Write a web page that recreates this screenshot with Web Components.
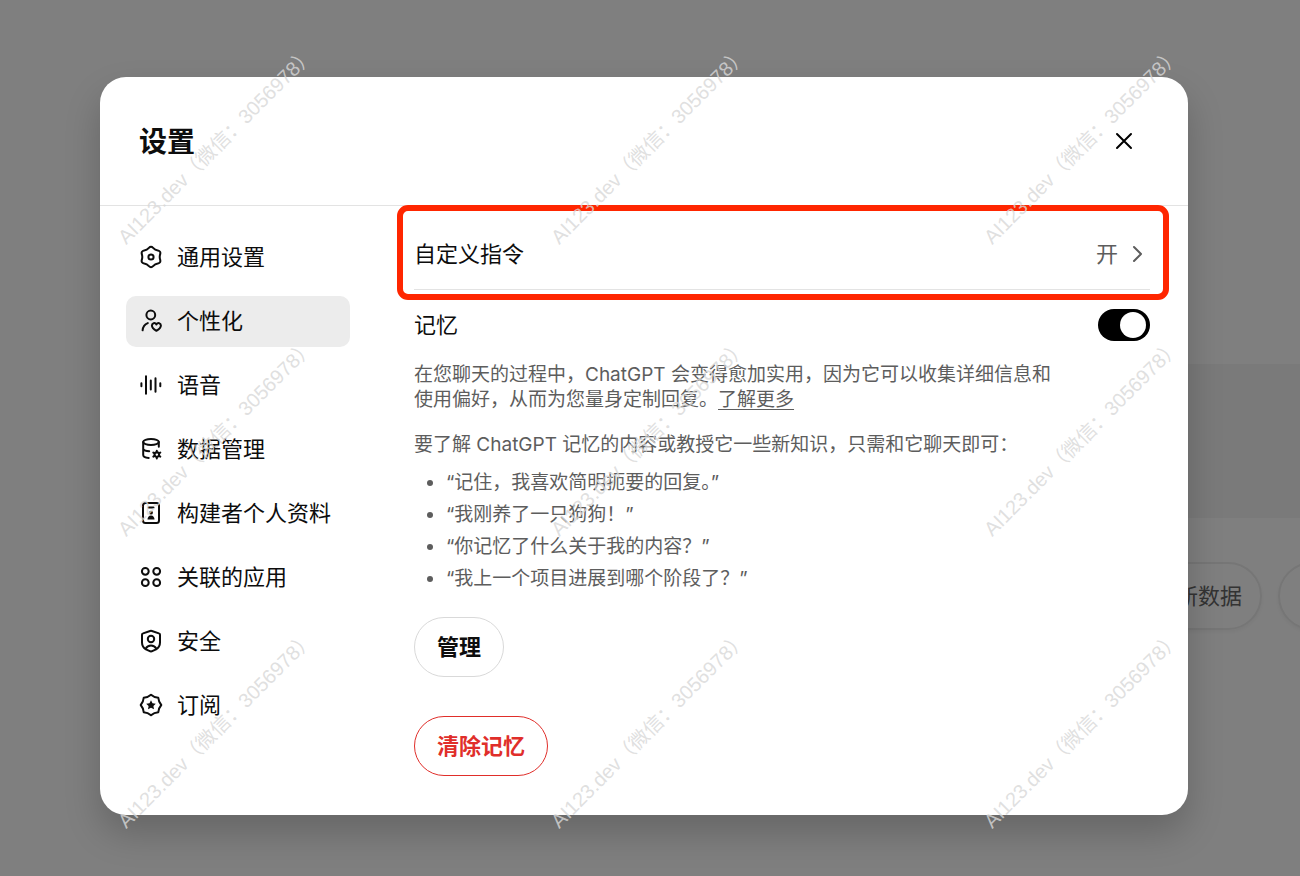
<!DOCTYPE html>
<html lang="zh-CN">
<head>
<meta charset="UTF-8">
<meta name="viewport" content="width=device-width, initial-scale=1.0">
<title>设置</title>
<style>
  body {
    margin: 0;
    background: #ffffff;
    font-family: Inter, "Noto Sans CJK SC", sans-serif;
    color: #0d0d0d;
  }
</style>
</head>
<body>
<chat-page>
  <settings-dialog heading="设置">
    <settings-tab slot="nav" icon="gear">通用设置</settings-tab>
    <settings-tab slot="nav" icon="person" active>个性化</settings-tab>
    <settings-tab slot="nav" icon="voice">语音</settings-tab>
    <settings-tab slot="nav" icon="data">数据管理</settings-tab>
    <settings-tab slot="nav" icon="builder">构建者个人资料</settings-tab>
    <settings-tab slot="nav" icon="apps">关联的应用</settings-tab>
    <settings-tab slot="nav" icon="shield">安全</settings-tab>
    <settings-tab slot="nav" icon="badge">订阅</settings-tab>

    <link-row value="开">自定义指令</link-row>
    <toggle-row>记忆</toggle-row>
    <memory-info></memory-info>
    <pill-button>管理</pill-button>
    <pill-button danger>清除记忆</pill-button>
  </settings-dialog>
</chat-page>
<water-mark text="AI123.dev（微信：3056978）"></water-mark>

<script>
const ICONS = {
  gear: `<path d="M9.900 2.900Q12 .6 14.100 2.900Q16 5 18.800 5.400Q22 6.200 21.200 9.200Q20.200 12 21.200 14.800Q22 17.800 18.800 18.600Q16 19 14.100 21.100Q12 23.400 9.900 21.100Q8 19 5.200 18.600Q2 17.800 2.800 14.800Q3.800 12 2.800 9.200Q2 6.200 5.200 5.400Q8 5 9.900 2.900z"/><circle cx="12" cy="12" r="2.600"/>`,
  person: `<circle cx="11.800" cy="6" r="4.400"/><path d="M3.600 21.300c.3-3.600 2.200-6 5.200-7.200"/><path d="M17.400 21.800c-2.700-1.500-4.500-3.100-4.500-5.200 0-2.600 3.100-3.400 4.500-1.200 1.400-2.200 4.500-1.400 4.500 1.200 0 2.100-1.800 3.700-4.500 5.200z"/>`,
  voice: `<path d="M2.400 10.300v3M7 3.300v17.400M11.800 7.500v9M16.500 5.300v13.400M21.300 10.300v3"/>`,
  data: `<ellipse cx="12" cy="5" rx="7.800" ry="3"/><path d="M4.200 5v13c0 1.500 2.200 2.700 5.500 3M19.800 5v4.800M4.200 12c.8 1.300 3 2.100 6 2.300"/><g stroke-width="2"><circle cx="17.800" cy="17.600" r="2.300"/><path d="M17.800 13.800v1.700M17.800 19.800v1.700M14.300 15.600l1.500.9M19.800 18.700l1.500.9M14.300 19.600l1.500-.9M19.800 16.500l1.500-.9"/></g>`,
  builder: `<rect x="4" y="2" width="16" height="20" rx="2.500"/><path d="M9.500 6.500h5"/><circle cx="12" cy="11.700" r="1.900" fill="currentColor" stroke="none"/><path d="M8.500 18.500c0-2.300 1.300-4.100 3.500-4.100s3.500 1.800 3.500 4.100z" fill="currentColor" stroke="none"/>`,
  apps: `<circle cx="6.300" cy="6.300" r="3.400"/><circle cx="17.700" cy="6.300" r="3.400"/><circle cx="6.300" cy="17.700" r="3.400"/><circle cx="17.700" cy="17.700" r="3.400"/>`,
  shield: `<path d="M11.100 2a3 3 0 0 1 1.800 0l7 2.400a1.500 1.500 0 0 1 1.100 1.500v7.600c0 3.200-1.500 5.300-3.900 6.800l-3.400 1.600a3.400 3.400 0 0 1-3.400 0l-3.400-1.600C4.500 18.800 3 16.700 3 13.500V5.900a1.500 1.500 0 0 1 1.100-1.500z"/><circle cx="12" cy="10" r="3.200"/><path d="M6.800 19.500c1-2 3-3.100 5.200-3.100s4.200 1.100 5.200 3.100"/>`,
  badge: `<path d="M12 1.700Q15.140 4.420 19.280 4.720Q19.580 8.860 22.300 12Q19.580 15.140 19.280 19.280Q15.140 19.580 12 22.300Q8.860 19.580 4.720 19.280Q4.420 15.140 1.700 12Q4.420 8.860 4.720 4.720Q8.860 4.420 12 1.700z"/><path d="M12 7.200l1.500 3 3.300.5-2.400 2.300.6 3.300-3-1.600-3 1.600.6-3.300-2.400-2.300 3.300-.5z" fill="currentColor" stroke="none"/>`,
  close: `<path d="M5 4l14 14M19 4L5 18"/>`,
  chevron: `<path d="M8 5l7 7-7 7"/>`
};

function icon(name) {
  return `<svg width="24" height="24" viewBox="0 0 24 24" fill="none" stroke="currentColor" stroke-width="2" stroke-linecap="round" stroke-linejoin="round" aria-hidden="true">${ICONS[name]}</svg>`;
}

// page behind the dialog, dimmed by the backdrop
class ChatPage extends HTMLElement {
  constructor() {
    super();
    this.attachShadow({ mode: "open" });
  }

  connectedCallback() {
    this.shadowRoot.innerHTML = `
      <style>
        :host {
          display: block;
          position: relative;
          min-height: 100vh;
          overflow: hidden;
        }
        .behind {
          position: absolute;
          inset: 0;
          padding-top: 364px;
        }
        .composer {
          height: 154px;
          margin-left: 160px;
          background: #f4f4f4;
        }
        .chips {
          display: flex;
          justify-content: flex-end;
          gap: 16px;
          margin-top: 44px;
          margin-right: -154px;
        }
        .chips button {
          flex: none;
          height: 68px;
          padding: 0 18px;
          border: 2px solid #ececec;
          border-radius: 34px;
          background: none;
          box-shadow: 0 2px 4px rgba(0, 0, 0, 0.05);
          font: inherit;
          font-size: 22px;
          line-height: 32px;
          color: #676767;
        }
        .chips button:last-child {
          width: 176px;
        }
        .backdrop {
          position: relative;
          box-sizing: border-box;
          min-height: 100vh;
          padding: 77px 112px 61px 100px;
          background: rgba(0, 0, 0, 0.5);
        }
      </style>
      <div class="behind">
        <div class="composer"></div>
        <div class="chips">
          <button type="button">分析最新数据</button>
          <button type="button">上传您的文件</button>
        </div>
      </div>
      <div class="backdrop"><slot></slot></div>
    `;
  }
}
customElements.define("chat-page", ChatPage);

class SettingsDialog extends HTMLElement {
  constructor() {
    super();
    this.attachShadow({ mode: "open" });
  }

  connectedCallback() {
    this.shadowRoot.innerHTML = `
      <style>
        :host {
          display: block;
          border-radius: 26px;
          background: #ffffff;
          box-shadow: 0 18px 36px rgba(0, 0, 0, 0.2);
        }
        header {
          display: flex;
          align-items: center;
          justify-content: space-between;
          padding: 41px 48px 39px 39px;
          border-bottom: 1px solid #e3e3e3;
        }
        h2 {
          margin: 0;
          font-size: 28px;
          line-height: 48px;
          font-weight: 700;
        }
        .close {
          display: grid;
          place-items: center;
          width: 32px;
          height: 32px;
          padding: 0;
          border: none;
          background: none;
          color: #000000;
        }
        .body {
          display: grid;
          grid-template-columns: 224px minmax(0, 1fr);
          gap: 64px;
          padding: 0 38px 39px 26px;
        }
        nav {
          display: flex;
          flex-direction: column;
          gap: 13px;
          padding-top: 26px;
        }
      </style>
      <header>
        <h2>${this.getAttribute("heading")}</h2>
        <button class="close" type="button" aria-label="关闭">${icon("close")}</button>
      </header>
      <div class="body">
        <nav><slot name="nav"></slot></nav>
        <section><slot></slot></section>
      </div>
    `;
  }
}
customElements.define("settings-dialog", SettingsDialog);

class SettingsTab extends HTMLElement {
  constructor() {
    super();
    this.attachShadow({ mode: "open" });
  }

  connectedCallback() {
    this.shadowRoot.innerHTML = `
      <style>
        :host {
          display: block;
        }
        button {
          display: flex;
          align-items: center;
          gap: 14px;
          width: 100%;
          height: 51px;
          padding: 0 13px 1px;
          border: none;
          border-radius: 10px;
          background: none;
          font: inherit;
          font-size: 22px;
          line-height: 32px;
          color: inherit;
          white-space: nowrap;
        }
        svg {
          flex: none;
        }
        :host([active]) button {
          background: #ececec;
        }
      </style>
      <button type="button">${icon(this.getAttribute("icon"))}<slot></slot></button>
    `;
  }
}
customElements.define("settings-tab", SettingsTab);

class LinkRow extends HTMLElement {
  constructor() {
    super();
    this.attachShadow({ mode: "open" });
  }

  connectedCallback() {
    this.shadowRoot.innerHTML = `
      <style>
        :host {
          display: block;
          position: relative;
          font-size: 22px;
        }
        .row {
          display: flex;
          align-items: center;
          justify-content: space-between;
          padding: 32px 0 19px;
          border-bottom: 1px solid #e3e3e3;
          line-height: 32px;
        }
        button {
          display: flex;
          align-items: center;
          gap: 8px;
          padding: 0;
          border: none;
          background: none;
          font: inherit;
          color: #5d5d5d;
        }
        /* red marker drawn around the row */
        .marker {
          position: absolute;
          inset: -1px -19px -10px -17px;
          border: 6px solid #ff2600;
          border-radius: 11px;
          pointer-events: none;
        }
      </style>
      <div class="row">
        <span id="label"><slot></slot></span>
        <button type="button" aria-describedby="label">${this.getAttribute("value")}${icon("chevron")}</button>
      </div>
      <div class="marker"></div>
    `;
  }
}
customElements.define("link-row", LinkRow);

class ToggleRow extends HTMLElement {
  constructor() {
    super();
    this.attachShadow({ mode: "open" });
  }

  connectedCallback() {
    this.shadowRoot.innerHTML = `
      <style>
        :host {
          display: block;
          padding: 19px 0 21px;
          font-size: 22px;
          line-height: 32px;
        }
        div {
          display: flex;
          align-items: center;
          justify-content: space-between;
        }
        input {
          appearance: none;
          display: flex;
          align-items: center;
          box-sizing: border-box;
          width: 52px;
          height: 32px;
          margin: 0;
          padding: 0 4px;
          border-radius: 16px;
          background: #cdcdcd;
        }
        input::before {
          content: "";
          width: 26px;
          height: 26px;
          border-radius: 50%;
          background: #ffffff;
        }
        input:checked {
          justify-content: flex-end;
          background: #000000;
        }
      </style>
      <div>
        <label for="switch"><slot></slot></label>
        <input id="switch" type="checkbox" role="switch" checked>
      </div>
    `;
  }
}
customElements.define("toggle-row", ToggleRow);

class MemoryInfo extends HTMLElement {
  constructor() {
    super();
    this.attachShadow({ mode: "open" });
  }

  connectedCallback() {
    this.shadowRoot.innerHTML = `
      <style>
        :host {
          display: block;
          padding-right: 88px;
          font-size: 19px;
          line-height: 25px;
          color: #5d5d5d;
        }
        p {
          margin: 0 0 20px;
        }
        p + p {
          margin-bottom: 10px;
        }
        a {
          color: inherit;
          text-underline-offset: 3px;
        }
        ul {
          margin: 0;
          padding-left: 32px;
          line-height: 32px;
        }
      </style>
      <p>在您聊天的过程中，ChatGPT 会变得愈加实用，因为它可以收集详细信息和使用偏好，从而为您量身定制回复。<a href="#">了解更多</a></p>
      <p>要了解 ChatGPT 记忆的内容或教授它一些新知识，只需和它聊天即可：</p>
      <ul>
        <li>“记住，我喜欢简明扼要的回复。”</li>
        <li>“我刚养了一只狗狗！”</li>
        <li>“你记忆了什么关于我的内容？”</li>
        <li>“我上一个项目进展到哪个阶段了？”</li>
      </ul>
    `;
  }
}
customElements.define("memory-info", MemoryInfo);

class PillButton extends HTMLElement {
  constructor() {
    super();
    this.attachShadow({ mode: "open" });
  }

  connectedCallback() {
    this.shadowRoot.innerHTML = `
      <style>
        :host {
          display: block;
          margin-top: 22px;
        }
        :host([danger]) {
          margin-top: 39px;
        }
        button {
          display: block;
          height: 60px;
          padding: 0 22px;
          border: 1px solid #d9d9d9;
          border-radius: 30px;
          background: #ffffff;
          font: inherit;
          font-size: 22px;
          line-height: 32px;
          font-weight: 600;
          color: inherit;
        }
        :host([danger]) button {
          border-color: #e02e2a;
          color: #e02e2a;
        }
      </style>
      <button type="button"><slot></slot></button>
    `;
  }
}
customElements.define("pill-button", PillButton);

// diagonal marks repeated on a 3 x 3 grid over everything
class WaterMark extends HTMLElement {
  constructor() {
    super();
    this.attachShadow({ mode: "open" });
  }

  connectedCallback() {
    this.shadowRoot.innerHTML = `
      <style>
        :host {
          position: absolute;
          inset: -2px 2px 2px -2px;
          display: grid;
          grid-template: repeat(3, 1fr) / repeat(3, 1fr);
          place-items: center;
          pointer-events: none;
          font-family: "Liberation Sans", "Noto Sans CJK SC", sans-serif;
          font-size: 20px;
          color: rgba(216, 216, 216, 0.8);
        }
        span {
          transform: rotate(-45deg);
          white-space: nowrap;
        }
      </style>
      ${`<span>${this.getAttribute("text")}</span>`.repeat(9)}
    `;
  }
}
customElements.define("water-mark", WaterMark);
</script>
</body>
</html>
